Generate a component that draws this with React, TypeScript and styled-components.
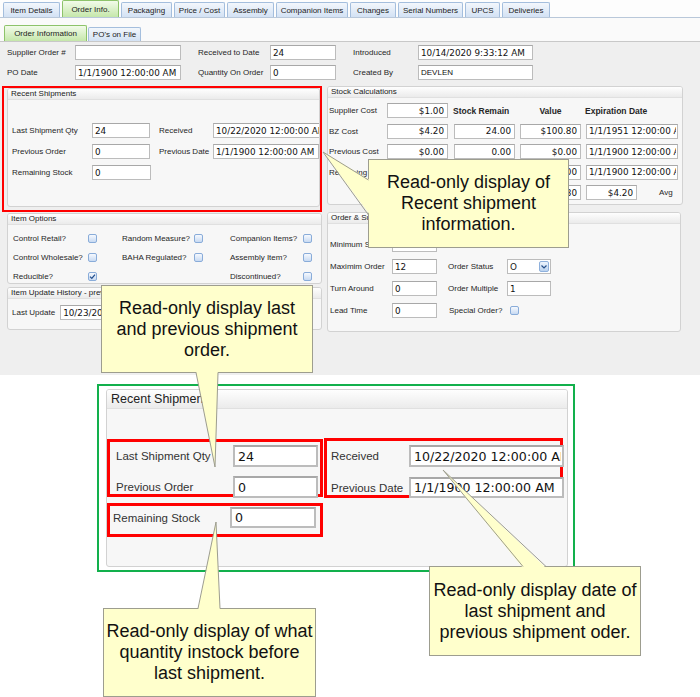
import styled, { createGlobalStyle } from 'styled-components'

const GlobalStyle = createGlobalStyle`
  html, body {
    margin: 0;
    padding: 0;
    background: #fff;
  }
  body {
    font-family: "Liberation Sans", Arial, sans-serif;
    color: #222;
  }
`

const Page = styled.div`
  position: relative;
  width: 700px;
  height: 697px;
  overflow: hidden;
  background: #fff;
  display: flex;
  flex-direction: column;
`

/* ---------- captured application screen ---------- */

const Screen = styled.div`
  height: 375px;
  flex: none;
  background: #efefef;
  display: flex;
  flex-direction: column;
  font-size: 8px;
`

const TabBar = styled.div`
  height: 17px;
  flex: none;
  display: flex;
  align-items: flex-end;
  gap: 2px;
  padding-left: 3px;
  background: #fdfdfd;
  border-bottom: 1px solid #b9c8da;
`

const SubBar = styled.div`
  height: 24px;
  flex: none;
  box-sizing: border-box;
  display: flex;
  align-items: flex-end;
  gap: 1px;
  padding-left: 4px;
  background: #fafafa;
  border-bottom: 1px solid #c8c8c8;
`

const Tab = styled.div<{ $w: number; $h: number; $active?: boolean }>`
  width: ${p => p.$w}px;
  height: ${p => p.$h}px;
  box-sizing: border-box;
  border: 1px solid ${p => (p.$active ? '#8dc36a' : '#a4bedd')};
  border-bottom: none;
  border-radius: 2px 2px 0 0;
  background: ${p =>
    p.$active ? 'linear-gradient(#f2fbea, #c5e7aa)' : 'linear-gradient(#f3f7fc, #d3e2f4)'};
  display: flex;
  align-items: center;
  justify-content: center;
  white-space: nowrap;
  font-size: 8px;
  color: #1c1c1c;
`

const Content = styled.div`
  flex: 1;
  padding: 3px 0 0 7px;
  display: flex;
  flex-direction: column;
`

const TopGrid = styled.div`
  display: grid;
  grid-template-columns: 68px 123px 72px 83px 65px 115px;
  grid-auto-rows: 15px;
  row-gap: 5px;
  align-items: center;
`

const Label = styled.span<{ $fs?: number; $bold?: boolean; $center?: boolean; $shift?: number }>`
  font-size: ${p => p.$fs ?? 8}px;
  font-weight: ${p => (p.$bold ? 700 : 400)};
  text-align: ${p => (p.$center ? 'center' : 'left')};
  margin-left: ${p => p.$shift ?? 0}px;
  white-space: nowrap;
  color: #262626;
`

const Field = styled.input.attrs({ readOnly: true })<{
  $w: number
  $h?: number
  $fs?: number
  $right?: boolean
  $plain?: boolean
  $thick?: boolean
}>`
  display: block;
  width: ${p => p.$w}px;
  height: ${p => p.$h ?? 15}px;
  box-sizing: border-box;
  margin: 0;
  padding: 0 ${p => (p.$right ? 3 : 1)}px 0 ${p => (p.$thick ? 3 : 2)}px;
  border: ${p => (p.$thick ? 2 : 1)}px solid #bcbcbc;
  border-top-color: #a8a8a8;
  border-radius: 0;
  background: #fff;
  color: #111;
  font-family: ${p => (p.$plain ? '"Liberation Sans", Arial' : '"DejaVu Sans", Verdana')}, sans-serif;
  font-size: ${p => p.$fs ?? 8.8}px;
  text-align: ${p => (p.$right ? 'right' : 'left')};
  outline: none;
`

const Columns = styled.div`
  margin-top: 6px;
  display: grid;
  grid-template-columns: 315px 356px;
  column-gap: 5px;
  align-items: start;
`

const Column = styled.div`
  display: flex;
  flex-direction: column;
`

const RedFrame = styled.div`
  margin-left: -5px;
  border: 2px solid #ff0000;
  padding: 0 0 3px 3px;
`

const Panel = styled.section<{ $h: number; $w?: number; $gap?: number }>`
  height: ${p => p.$h}px;
  width: ${p => (p.$w ? `${p.$w}px` : 'auto')};
  margin-top: ${p => p.$gap ?? 0}px;
  box-sizing: border-box;
  border: 1px solid #d2d2d2;
  border-radius: 3px;
  background: #f7f7f7;
  overflow: hidden;
  display: flex;
  flex-direction: column;
`

const PanelHead = styled.div<{ $big?: boolean }>`
  height: ${p => (p.$big ? 18 : 10)}px;
  flex: none;
  padding-left: ${p => (p.$big ? 4 : 3)}px;
  font-size: ${p => (p.$big ? 12.5 : 8)}px;
  line-height: ${p => (p.$big ? 18 : 10)}px;
  background: linear-gradient(#fefefe, #ebebeb);
  border-bottom: 1px solid #e0e0e0;
  white-space: nowrap;
  color: #222;
`

const ShipGrid = styled.div`
  display: grid;
  grid-template-columns: 80px 67px 54px 110px;
  grid-auto-rows: 15px;
  row-gap: 6px;
  align-items: center;
  padding: 23px 0 0 4px;
`

const StockGrid = styled.div`
  display: grid;
  grid-template-columns: 58px 67px 66px 66px 96px;
  grid-auto-rows: 15px;
  row-gap: 5.5px;
  align-items: center;
  padding: 5px 0 0 1px;
`

const AvgCell = styled.div`
  display: flex;
  align-items: center;
  gap: 22px;
`

const OptionGrid = styled.div`
  display: grid;
  grid-template-columns: 75px 34px 72px 36px 73px 1fr;
  grid-auto-rows: 19px;
  align-items: center;
  padding: 4px 0 0 5px;
`

const HistoryRow = styled.div`
  display: flex;
  align-items: center;
  gap: 5px;
  padding: 6px 0 0 4px;
`

const OrderGrid = styled.div`
  display: grid;
  grid-template-columns: 62px 56px 59px 44px;
  grid-auto-rows: 15px;
  row-gap: 7px;
  align-items: center;
  padding: 13px 0 0 2px;
`

const Check = styled.span<{ $shift?: number }>`
  display: inline-flex;
  width: 9px;
  height: 9px;
  margin-left: ${p => p.$shift ?? 0}px;
  box-sizing: border-box;
  border: 1px solid #89acd9;
  border-radius: 2px;
  background: linear-gradient(#f6f9fe, #c8daf2);
  align-items: center;
  justify-content: center;
`

const Select = styled.div`
  width: 44px;
  height: 15px;
  box-sizing: border-box;
  border: 1px solid #bcbcbc;
  background: #fff;
  display: flex;
  align-items: center;
  padding: 0 1px 0 2px;
  font-family: "DejaVu Sans", Verdana, sans-serif;
  font-size: 8.8px;
`

const DropButton = styled.span`
  margin-left: auto;
  width: 10px;
  height: 11px;
  box-sizing: border-box;
  border: 1px solid #8eb0dc;
  border-radius: 2px;
  background: linear-gradient(#eef5fd, #bad2ef);
  display: flex;
  align-items: center;
  justify-content: center;
`

/* ---------- zoomed detail below ---------- */

const Zoomed = styled.div`
  flex: none;
  padding: 9px 0 0 97px;
`

const GreenFrame = styled.div`
  width: 478px;
  height: 188px;
  box-sizing: border-box;
  border: 2px solid #12b04c;
  padding: 3px 5px 3px 7px;
`

const BigBody = styled.div`
  padding-top: 29px;
  display: flex;
  flex-direction: column;
`

const BoxRow = styled.div`
  display: flex;
  align-items: center;
  gap: 1px;
  height: 60px;
`

const Mark = styled.div<{ $w: number; $h: number; $pad: string; $top?: number }>`
  width: ${p => p.$w}px;
  height: ${p => p.$h}px;
  margin-top: ${p => p.$top ?? 0}px;
  box-sizing: border-box;
  border: 3px solid #ff0000;
  padding: ${p => p.$pad};
  display: grid;
  grid-template-columns: auto 1fr;
  align-content: start;
  align-items: center;
`

const BigLabel = styled.span<{ $w: number }>`
  width: ${p => p.$w}px;
  font-size: 11.5px;
  color: #333;
  white-space: nowrap;
`

/* ---------- annotation callouts ---------- */

const Callout = styled.div<{ $x: number; $y: number; $w: number; $h: number }>`
  position: absolute;
  left: ${p => p.$x}px;
  top: ${p => p.$y}px;
  width: ${p => p.$w}px;
  height: ${p => p.$h}px;
  box-sizing: border-box;
  background: #ffffcc;
  border: 1px solid #9d9d8f;
  display: flex;
  align-items: center;
  justify-content: center;
  text-align: center;
  font-family: "Liberation Sans", Arial, sans-serif;
  font-size: 18px;
  line-height: 21px;
  color: #111;
  z-index: 2;
`

const TailLayer = styled.svg`
  position: absolute;
  left: 0;
  top: 0;
  width: 700px;
  height: 697px;
  pointer-events: none;
  z-index: 3;
`

const tabs = [
  { label: 'Item Details', w: 57 },
  { label: 'Order Info.', w: 57 },
  { label: 'Packaging', w: 51 },
  { label: 'Price / Cost', w: 51 },
  { label: 'Assembly', w: 47 },
  { label: 'Companion Items', w: 72 },
  { label: 'Changes', w: 46 },
  { label: 'Serial Numbers', w: 65 },
  { label: 'UPCS', w: 35 },
  { label: 'Deliveries', w: 48 },
]

type Pt = [number, number]
const tails: { a: Pt; tip: Pt; b: Pt; fill: [Pt, Pt] }[] = [
  { a: [368.5, 180], tip: [323, 152], b: [368.5, 215], fill: [[370, 180], [370, 215]] },
  { a: [196, 372.5], tip: [215, 467], b: [218, 372.5], fill: [[196, 371], [218, 371]] },
  { a: [198, 608.5], tip: [216, 522], b: [220, 608.5], fill: [[198, 610], [220, 610]] },
  { a: [523, 566.5], tip: [443, 470], b: [546, 566.5], fill: [[523, 568], [546, 568]] },
]

function Box({ on, shift }: { on?: boolean; shift?: number }) {
  return (
    <Check $shift={shift}>
      {on && (
        <svg width="7" height="7" viewBox="0 0 7 7">
          <path d="M1 3.6 L2.8 5.4 L6 1.6" fill="none" stroke="#24508f" strokeWidth="1.3" />
        </svg>
      )}
    </Check>
  )
}

export default function App() {
  return (
    <Page>
      <GlobalStyle />
      <Screen>
        <TabBar>
          {tabs.map(t => (
            <Tab key={t.label} $w={t.w} $h={t.label === 'Order Info.' ? 17 : 15} $active={t.label === 'Order Info.'}>
              {t.label}
            </Tab>
          ))}
        </TabBar>
        <SubBar>
          <Tab $w={83} $h={16} $active>Order Information</Tab>
          <Tab $w={53} $h={14}>PO's on File</Tab>
        </SubBar>
        <Content>
          <TopGrid>
            <Label>Supplier Order #</Label>
            <Field $w={106} value="" />
            <Label>Received to Date</Label>
            <Field $w={66} value="24" />
            <Label>Introduced</Label>
            <Field $w={115} value="10/14/2020 9:33:12 AM" />
            <Label>PO Date</Label>
            <Field $w={106} value="1/1/1900 12:00:00 AM" />
            <Label>Quantity On Order</Label>
            <Field $w={66} value="0" />
            <Label>Created By</Label>
            <Field $w={115} $plain $fs={8} value="DEVLEN" />
          </TopGrid>

          <Columns>
            <Column>
              <RedFrame>
                <Panel $h={119}>
                  <PanelHead>Recent Shipments</PanelHead>
                  <ShipGrid>
                    <Label>Last Shipment Qty</Label>
                    <Field $w={58} value="24" />
                    <Label>Received</Label>
                    <Field $w={112} value="10/22/2020 12:00:00 AM" />
                    <Label>Previous Order</Label>
                    <Field $w={58} value="0" />
                    <Label>Previous Date</Label>
                    <Field $w={106} value="1/1/1900 12:00:00 AM" />
                    <Label>Remaining Stock</Label>
                    <Field $w={59} value="0" />
                  </ShipGrid>
                </Panel>
              </RedFrame>

              <Panel $h={71} $gap={1}>
                <PanelHead>Item Options</PanelHead>
                <OptionGrid>
                  <Label>Control Retail?</Label>
                  <Box />
                  <Label>Random Measure?</Label>
                  <Box />
                  <Label>Companion Items?</Label>
                  <Box />
                  <Label>Control Wholesale?</Label>
                  <Box />
                  <Label>BAHA Regulated?</Label>
                  <Box />
                  <Label>Assembly Item?</Label>
                  <Box />
                  <Label>Reducible?</Label>
                  <Box on />
                  <span />
                  <span />
                  <Label>Discontinued?</Label>
                  <Box />
                </OptionGrid>
              </Panel>

              <Panel $h={43} $gap={3}>
                <PanelHead>Item Update History - previous values</PanelHead>
                <HistoryRow>
                  <Label>Last Update</Label>
                  <Field $w={112} value="10/23/2020 9:14:31 AM" />
                </HistoryRow>
              </Panel>
            </Column>

            <Column>
              <Panel $h={119}>
                <PanelHead>Stock Calculations</PanelHead>
                <StockGrid>
                  <Label>Supplier Cost</Label>
                  <Field $w={61} $right value="$1.00" />
                  <Label $bold $fs={8.5} $shift={-1}>Stock Remain</Label>
                  <Label $bold $fs={8.5} $center style={{ width: 61 }}>Value</Label>
                  <Label $bold $fs={8.5} $shift={-1}>Expiration Date</Label>

                  <Label>BZ Cost</Label>
                  <Field $w={61} $right value="$4.20" />
                  <Field $w={61} $right value="24.00" />
                  <Field $w={61} $right value="$100.80" />
                  <Field $w={92} value="1/1/1951 12:00:00 AM" />

                  <Label>Previous Cost</Label>
                  <Field $w={61} $right value="$0.00" />
                  <Field $w={61} $right value="0.00" />
                  <Field $w={61} $right value="$0.00" />
                  <Field $w={92} value="1/1/1900 12:00:00 AM" />

                  <Label>Remaining Cost</Label>
                  <Field $w={61} $right value="$0.00" />
                  <Field $w={61} $right value="0.00" />
                  <Field $w={61} $right value="$0.00" />
                  <Field $w={92} value="1/1/1900 12:00:00 AM" />

                  <span />
                  <span />
                  <Field $w={61} $right value="24.00" />
                  <Field $w={61} $right value="$100.80" />
                  <AvgCell>
                    <Field $w={51} $right value="$4.20" />
                    <Label>Avg</Label>
                  </AvgCell>
                </StockGrid>
              </Panel>

              <Panel $h={120} $w={354} $gap={7}>
                <PanelHead>Order &amp; Supplier Info</PanelHead>
                <OrderGrid>
                  <Label>Minimum Stock</Label>
                  <Field $w={45} value="0" />
                  <span />
                  <span />

                  <Label>Maximim Order</Label>
                  <Field $w={45} value="12" />
                  <Label>Order Status</Label>
                  <Select>
                    O
                    <DropButton>
                      <svg width="6" height="4" viewBox="0 0 6 4">
                        <path d="M0.5 0.5 L3 3 L5.5 0.5" fill="none" stroke="#27508a" strokeWidth="1.2" />
                      </svg>
                    </DropButton>
                  </Select>

                  <Label>Turn Around</Label>
                  <Field $w={45} value="0" />
                  <Label>Order Multiple</Label>
                  <Field $w={44} value="1" />

                  <Label>Lead Time</Label>
                  <Field $w={45} value="0" />
                  <Label $shift={1}>Special Order?</Label>
                  <Box shift={3} />
                </OrderGrid>
              </Panel>
            </Column>
          </Columns>
        </Content>
      </Screen>

      <Zoomed>
        <GreenFrame>
          <Panel $h={178}>
            <PanelHead $big>Recent Shipments</PanelHead>
            <BigBody>
              <BoxRow>
                <Mark $w={216} $h={58} $pad="3px 0 0 6px" style={{ rowGap: 9 }}>
                  <BigLabel $w={117}>Last Shipment Qty</BigLabel>
                  <Field $w={85} $h={22} $fs={12.6} $thick value="24" />
                  <BigLabel $w={117}>Previous Order</BigLabel>
                  <Field $w={85} $h={22} $fs={12.6} $thick value="0" />
                </Mark>
                <Mark $w={239} $h={60} $pad="4px 0 0 4px" style={{ rowGap: 10 }}>
                  <BigLabel $w={78}>Received</BigLabel>
                  <Field $w={155} $h={22} $fs={12.6} $thick value="10/22/2020 12:00:00 AM" />
                  <BigLabel $w={78}>Previous Date</BigLabel>
                  <Field $w={155} $h={21} $fs={12.6} $thick value="1/1/1900 12:00:00 AM" />
                </Mark>
              </BoxRow>
              <Mark $w={216} $h={34} $pad="1px 0 0 3px" $top={5}>
                <BigLabel $w={117}>Remaining Stock</BigLabel>
                <Field $w={86} $h={21} $fs={12.6} $thick value="0" />
              </Mark>
            </BigBody>
          </Panel>
        </GreenFrame>
      </Zoomed>

      <Callout $x={368} $y={159} $w={201} $h={89}>
        <span>Read-only display of<br />Recent shipment<br />information.</span>
      </Callout>
      <Callout $x={101} $y={285} $w={212} $h={88}>
        <span>Read-only display last<br />and previous shipment<br />order.</span>
      </Callout>
      <Callout $x={103} $y={608} $w={213} $h={89}>
        <span>Read-only display of what<br />quantity instock before<br />last shipment.</span>
      </Callout>
      <Callout $x={429} $y={566} $w={212} $h={90}>
        <span>Read-only display date of<br />last shipment and<br />previous shipment oder.</span>
      </Callout>

      <TailLayer viewBox="0 0 700 697">
        {tails.map((t, i) => (
          <g key={i}>
            <polygon points={`${t.fill[0].join(',')} ${t.tip.join(',')} ${t.fill[1].join(',')}`} fill="#ffffcc" />
            <polyline
              points={`${t.a.join(',')} ${t.tip.join(',')} ${t.b.join(',')}`}
              fill="none"
              stroke="#9d9d8f"
              strokeWidth="1"
            />
          </g>
        ))}
      </TailLayer>
    </Page>
  )
}
